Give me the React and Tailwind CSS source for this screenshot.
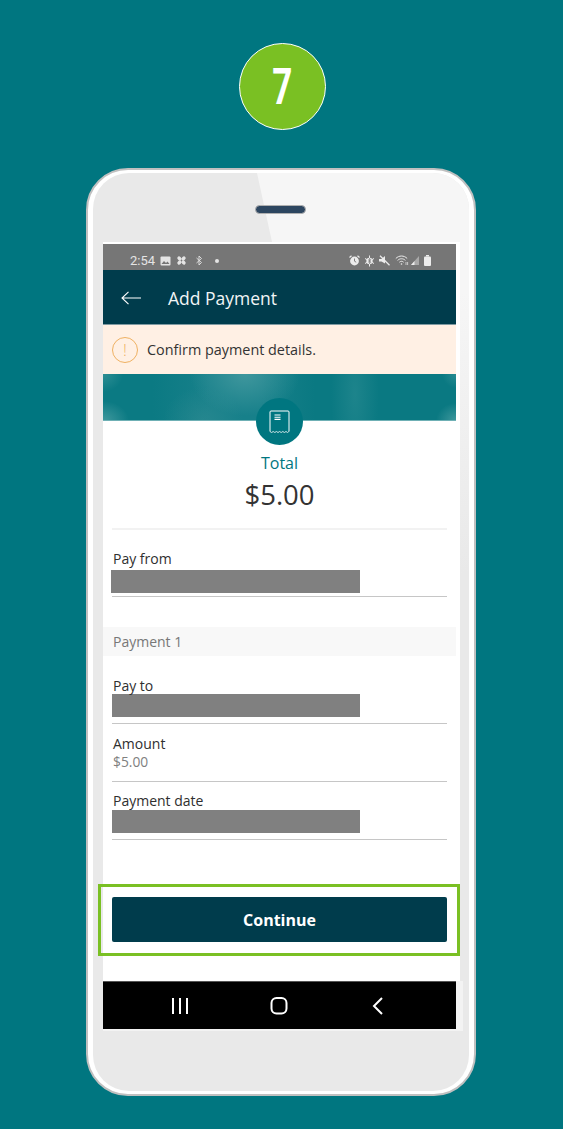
const sans = { fontFamily: '"Open Sans", "Noto Sans", sans-serif' };

const Bar = ({ className = '' }) => <div className={`h-[23px] bg-[#808080] ${className}`}></div>;
const Line = ({ className = '' }) => <div className={`h-px bg-[#c6c6c6] ${className}`}></div>;
const Label = ({ children, className = '' }) => (
    <div className={`text-[14px] leading-[18px] font-medium text-[#2f2f2f] pl-[1px] ${className}`}>{children}</div>
);

const StatusLeft = () => (
    <div className="flex items-center ml-[27px] text-[#e4e4e4]">
        <span className="text-[13px] leading-[16px] w-[30px]" style={{ fontFamily: 'Roboto, sans-serif' }}>2:54</span>
        <svg width="11" height="10" viewBox="0 0 11 10" className="mr-[5px]">
            <rect x="0.5" y="0.5" width="10" height="9" rx="1" fill="#e4e4e4" />
            <path d="M1.5 8l2.5-3 2 2 1.5-1.5L9.5 8z" fill="#767676" />
        </svg>
        <svg width="11" height="11" viewBox="0 0 11 11" className="mr-[9px] rotate-45" fill="#e4e4e4">
            <ellipse cx="5.5" cy="2.6" rx="1.8" ry="2.4" />
            <ellipse cx="5.5" cy="8.4" rx="1.8" ry="2.4" />
            <ellipse cx="2.6" cy="5.5" rx="2.4" ry="1.8" />
            <ellipse cx="8.4" cy="5.5" rx="2.4" ry="1.8" />
            <circle cx="5.5" cy="5.5" r="0.8" fill="#767676" />
        </svg>
        <svg width="6" height="11" viewBox="0 0 6 11" className="mr-[13px]" fill="none" stroke="#e4e4e4" strokeWidth="0.9">
            <path d="M0.5 3l5 4.5L3 10V1l2.5 2.5L0.5 8" />
        </svg>
        <div className="w-[4px] h-[4px] rounded-full bg-[#e4e4e4]"></div>
    </div>
);

const StatusRight = () => (
    <div className="flex items-center ml-auto mr-[25px]">
        <svg width="11" height="11" viewBox="0 0 11 11" className="mr-[4px]">
            <circle cx="5.5" cy="6" r="4.4" fill="#ececec" />
            <path d="M0.5 2.5L2.5 0.8M10.5 2.5L8.5 0.8" stroke="#ececec" strokeWidth="1.2" />
            <path d="M5.5 3.5V6.2L7.2 7.2" stroke="#767676" strokeWidth="0.9" fill="none" />
        </svg>
        <svg width="11" height="12" viewBox="0 0 11 12" className="mr-[4px]" fill="none" stroke="#ececec">
            <path d="M1 3.5l9 5M10 3.5l-9 5M5.5 0.5v11" strokeWidth="1" />
            <circle cx="5.5" cy="6" r="3.2" fill="#ececec" stroke="none" />
            <path d="M4 4.6l3 2.6-1.5 1.5V3.3L7 4.8 4 7.4" stroke="#767676" strokeWidth="0.7" />
        </svg>
        <svg width="11" height="11" viewBox="0 0 11 11" className="mr-[5px]">
            <path d="M0 4h2.5L6 1v7.5L2.5 6.5H0z" fill="#ececec" />
            <path d="M1 0.8l9.5 9.5" stroke="#ececec" strokeWidth="1.3" />
        </svg>
        <svg width="14" height="11" viewBox="0 0 14 11" className="mr-[2px]" fill="none" stroke="#ececec" strokeWidth="1">
            <path d="M0.8 3.5C4 0.2 9 0.2 12.2 3.5" />
            <path d="M2.6 5.4C4.9 3.2 8.1 3.2 10.4 5.4" />
            <path d="M4.4 7.2C5.7 6 7.3 6 8.6 7.2" />
            <circle cx="6.5" cy="9" r="0.8" fill="#ececec" stroke="none" />
            <path d="M11 7v3M12.6 7v3" strokeWidth="0.7" />
        </svg>
        <svg width="8" height="9" viewBox="0 0 8 9" className="mr-[5px]">
            <path d="M0 9L8 0v9z" fill="#a9a9a9" />
            <path d="M0 9l3.5-4v4z" fill="#ececec" />
        </svg>
        <svg width="7" height="11" viewBox="0 0 7 11">
            <rect x="2" y="0" width="3" height="1.5" fill="#ececec" />
            <rect x="0" y="1.5" width="7" height="9.5" rx="1" fill="#ececec" />
        </svg>
    </div>
);

const Screen = () => (
    <div className="w-[357px] bg-white pt-[2px]" style={sans}>
        <div className="w-[353px]">
            <div className="h-[26px] bg-[#767676] flex items-center pt-[7px]">
                <StatusLeft />
                <StatusRight />
            </div>

            <div className="h-[55px] bg-[#003c4c] flex items-center border-b border-[#7f9aa2] pt-[2px]">
                <svg width="20" height="14" viewBox="0 0 20 14" className="ml-[18px]" fill="none" stroke="#fff" strokeWidth="1.1">
                    <path d="M20 7H1M7.5 0.8L1 7l6.5 6.2" />
                </svg>
                <span className="ml-[27px] text-[17.5px] text-[#f1f5f6]">Add Payment</span>
            </div>

            <div className="h-[49px] bg-[#fff0e4] flex items-center pl-[9px]">
                <div className="w-[26px] h-[26px] rounded-full border border-[#efb162] flex items-center justify-center text-[#efb162] text-[16px] font-light leading-none">!</div>
                <span className="ml-[9px] text-[14.4px] font-medium text-[#333]">Confirm payment details.</span>
            </div>

            <div className="h-[47px] border-b border-[#6fb0b5] bg-[radial-gradient(ellipse_55px_42px_at_142px_0px,rgba(80,160,165,0.7),transparent),radial-gradient(ellipse_40px_34px_at_100px_47px,rgba(60,145,150,0.4),transparent),radial-gradient(ellipse_24px_90px_at_252px_20px,rgba(60,150,155,0.38),transparent),radial-gradient(ellipse_26px_20px_at_0px_47px,rgba(130,190,190,0.45),transparent),radial-gradient(ellipse_20px_18px_at_0px_0px,rgba(110,180,180,0.35),transparent),radial-gradient(ellipse_20px_18px_at_353px_47px,rgba(130,190,190,0.45),transparent),radial-gradient(ellipse_14px_14px_at_353px_0px,rgba(110,180,180,0.3),transparent),linear-gradient(90deg,#0b7a83_0%,#0b7a83_14%,#17808a_30%,#17808a_45%,#0a7982_60%,#0a7982_100%)]"></div>

            <div className="relative w-[47px] h-[47px] rounded-full bg-[#007680] mx-auto -mt-[23px] flex items-center justify-center">
                <svg width="21" height="23" viewBox="0 0 21 23" fill="none" stroke="#fff" strokeWidth="1">
                    <path d="M1 21.5V2a1 1 0 0 1 1-1h17a1 1 0 0 1 1 1v19.5" />
                    <path d="M1 21.5l1.6 1 1.6-1 1.6 1 1.6-1 1.6 1 1.6-1 1.6 1 1.6-1 1.6 1 1.6-1 1.6 1 1.2-1" strokeWidth="0.8" />
                    <path d="M5.5 5h6M5.5 7.2h6M5.5 9.4h6" strokeWidth="1.1" />
                </svg>
            </div>

            <div className="mt-[6px] text-center text-[16px] leading-[24px] font-medium text-[#007680]">Total</div>
            <div className="mt-[2px] text-center text-[27.5px] leading-[36px] text-[#333]">$5.00</div>

            <div className="px-[9px]">
                <div className="h-[2px] bg-[#f2f2f2] mt-[15px]"></div>
                <Label className="mt-[20px]">Pay from</Label>
                <Bar className="w-[249px] -ml-[1px] mt-[2px]" />
                <Line className="mt-[3px]" />
            </div>

            <div className="mt-[30px] h-[29px] bg-[#f8f8f8] pl-[10px] flex items-center text-[14px] font-medium text-[#777]">Payment 1</div>

            <div className="px-[9px]">
                <Label className="mt-[21px]">Pay to</Label>
                <Bar className="w-[248px] -mt-[1px]" />
                <Line className="mt-[6px]" />
                <Label className="mt-[11px]">Amount</Label>
                <div className="text-[13.8px] leading-[18px] text-[#808080] pl-[1px]">$5.00</div>
                <Line className="mt-[10px]" />
                <Label className="mt-[10px]">Payment date</Label>
                <Bar className="w-[248px]" />
                <Line className="mt-[6px]" />
            </div>

            <div className="mt-[44px] -ml-[5px] w-[362px] h-[72px] border-[3px] border-[#7ac023] pl-[11px] pt-[10px]">
                <button className="w-[335px] h-[45px] rounded-[2px] bg-[#003c4c] text-white text-[16px] font-bold">Continue</button>
            </div>

            <div className="mt-[25px] w-[360px] h-[50px] bg-[#f3f3f3]">
                <div className="w-[353px] h-[48px] bg-black flex items-center justify-center gap-[79px] border-t border-[#555]">
                    <svg width="20" height="18" viewBox="0 0 20 18" fill="none" stroke="#fff" strokeWidth="2">
                        <path d="M2 1v16M9 1v16M16 1v16" />
                    </svg>
                    <svg width="20" height="18" viewBox="0 0 20 18" fill="none" stroke="#fff" strokeWidth="2">
                        <rect x="1.5" y="1" width="15" height="15.5" rx="5" />
                    </svg>
                    <svg width="20" height="18" viewBox="0 0 20 18" fill="none" stroke="#fff" strokeWidth="2">
                        <path d="M13 1L5 9l8 8" />
                    </svg>
                </div>
            </div>
        </div>
    </div>
);

export default function App() {
    return (
        <div className="w-[563px] h-[1129px] bg-[#007680] overflow-hidden pt-[43px] pl-[86px]">
            <div className="w-[87px] h-[87px] ml-[153px] rounded-full bg-[#7ac023] border border-white flex items-center justify-center mb-[38px]">
                <span className="text-[50px] leading-none font-bold text-white scale-x-70" style={{ fontFamily: 'Roboto, sans-serif' }}>7</span>
            </div>

            <div className="w-[390px] h-[928px] rounded-[42px] border-2 border-[#c0c0c0] bg-white py-[3px] px-[5px]">
                <div className="relative w-full h-full rounded-[36px] bg-[#e9e9e9] overflow-hidden">
                    <div className="absolute inset-x-0 top-0 h-[400px] bg-[linear-gradient(#f6f6f6_0,#f6f6f6_120px,#e9e9e9_100%)] [clip-path:polygon(164px_0,100%_0,100%_100%,179px_100%,179px_69px)]"></div>
                    <div className="relative h-[69px] pt-[32px]">
                        <div className="w-[51px] h-[9px] mx-auto -translate-x-[1px] rounded-full bg-[#2d4660] border border-[#b0b0b0]"></div>
                    </div>
                    <div className="relative pl-[10px]">
                        <Screen />
                    </div>
                </div>
            </div>
        </div>
    );
}
